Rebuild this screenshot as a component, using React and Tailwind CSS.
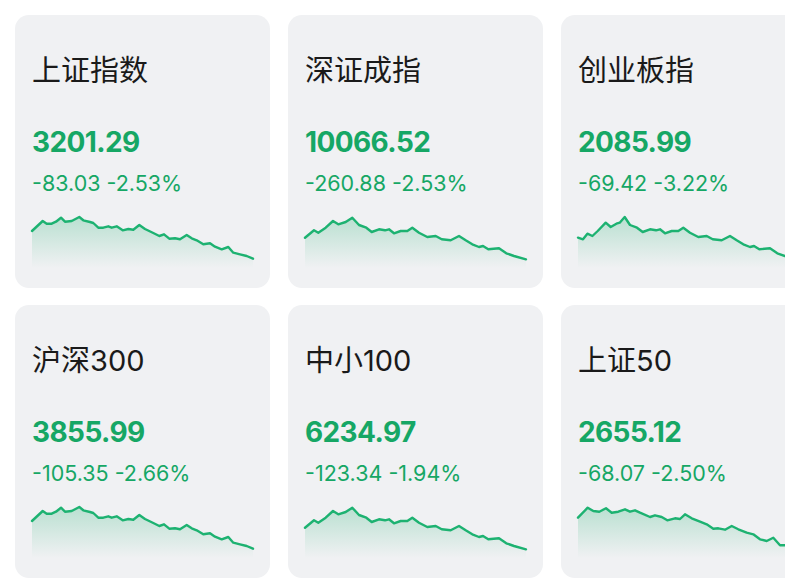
import React from "react";

const shA = [
  [0, 19], [10.7, 9], [14.7, 11.7], [19.7, 11.7], [24, 9.7], [29, 5.7], [33, 9.7], [39.7, 9],
  [47.3, 5], [51.3, 8.3], [58, 10], [61.3, 11], [66.3, 15.7], [71.3, 15.7], [76.3, 14.3],
  [79.7, 15.7], [84.7, 14.3], [90.7, 18.3], [96.3, 17], [101.3, 17.7], [107.3, 13], [113, 17],
  [121.3, 21], [127.3, 24], [132, 22.3], [137.3, 26.7], [143, 26.3], [148, 27.3], [154.7, 23],
  [159.7, 26.3], [164.7, 28.3], [171.3, 32.3], [178, 31.3], [183, 34.7], [189.7, 37.3],
  [196.3, 35], [201.3, 40.7], [208, 42.3], [214.7, 44], [221, 46.7],
];

const szB = [
  [0, 25.7], [9, 18.3], [13.3, 20.7], [20.7, 15.7], [28, 9], [33.3, 12.3], [40.7, 10], [47.3, 5.7],
  [54, 13], [61.3, 15.7], [66.7, 20], [74, 17.3], [80, 18.3], [84, 17.3], [89, 21.3], [95.7, 19],
  [102.3, 19], [107.3, 15.7], [114, 20.7], [122.3, 25], [130.7, 24], [136.7, 27.3], [145.7, 28.3],
  [154, 24], [160.7, 28.3], [167.3, 32.3], [174, 35], [178, 34], [183.3, 37.3], [194, 36.3],
  [201.3, 41.3], [209, 44], [221, 47.3],
];

const cyC = [
  [0, 25.7], [5, 27.3], [9.4, 21.7], [14.4, 24], [19.7, 19], [27.7, 10.7], [32.7, 15], [38.4, 11.7],
  [41.7, 10.7], [46.7, 5], [52, 13], [59, 15.7], [64.7, 20], [72, 17.3], [78, 18.3], [82, 17.3],
  [87, 21.3], [93.7, 19], [100.3, 19], [105.3, 15.7], [112, 20.7], [120.3, 25], [128.7, 24],
  [134.7, 27.3], [143.7, 28.3], [152, 24], [158.7, 28.3], [165.3, 32.3], [172, 35], [176, 34],
  [181.3, 37.3], [192, 36.3], [199.3, 41.3], [207, 44], [221, 47.3],
];

const sz50 = [
  [0, 15.7], [9.7, 5.7], [15.3, 9], [21.3, 9.7], [28, 6.3], [33.7, 10.7], [40.3, 9.7], [47, 7.3],
  [52, 9.7], [57, 8.3], [62, 10.7], [72, 15], [77, 13.3], [83.7, 15], [89.3, 18.3], [97, 16.3],
  [102, 17], [107, 12.3], [113.7, 16.3], [122, 19.7], [128.7, 22.3], [135.3, 26.7], [140.3, 26.3],
  [147, 27.7], [153.7, 24], [160.3, 27.3], [168.7, 30.7], [175.3, 32.3], [182, 37.3], [188.7, 39],
  [195.3, 35.7], [202, 43.3], [207, 43.3], [214, 45], [221, 46.5],
];

const indexes = [
  { name: "上证指数", price: "3201.29", change: "-83.03 -2.53%", points: shA },
  { name: "深证成指", price: "10066.52", change: "-260.88 -2.53%", points: szB },
  { name: "创业板指", price: "2085.99", change: "-69.42 -3.22%", points: cyC },
  { name: "沪深300", price: "3855.99", change: "-105.35 -2.66%", points: shA },
  { name: "中小100", price: "6234.97", change: "-123.34 -1.94%", points: szB },
  { name: "上证50", price: "2655.12", change: "-68.07 -2.50%", points: sz50 },
];

function Spark({ points, id }) {
  const line = points.map(([x, y], i) => `${i ? "L" : "M"}${x},${y}`).join(" ");
  const area = `${line} L221,56 L0,56 Z`;
  return (
    <svg width="221" height="56" viewBox="0 0 221 56" className="block overflow-visible">
      <defs>
        <linearGradient id={id} x1="0" y1="0" x2="0" y2="1">
          <stop offset="0%" stopColor="#1fb070" stopOpacity="0.26" />
          <stop offset="100%" stopColor="#1fb070" stopOpacity="0" />
        </linearGradient>
      </defs>
      <path d={area} fill={`url(#${id})`} />
      <path d={line} fill="none" stroke="#1db271" strokeWidth="2.4" strokeLinejoin="round" strokeLinecap="round" />
    </svg>
  );
}

function IndexCard({ item, index }) {
  return (
    <div className="flex h-[273px] w-[255px] shrink-0 flex-col rounded-[14px] bg-[#f0f1f3] px-[17px] pt-[41px]">
      <div className="text-[29px] leading-none text-[#1a1a1a]">{item.name}</div>
      <div className="mt-[43px] text-[28px] font-bold leading-none tracking-[-0.6px] text-[#16a765]">
        {item.price}
      </div>
      <div className="mt-[17px] text-[21.5px] leading-none text-[#16a765]">{item.change}</div>
      <div className="mt-[17px]">
        <Spark points={item.points} id={`spark${index}`} />
      </div>
    </div>
  );
}

export default function App() {
  return (
    <div className="h-[588px] w-[785px] overflow-hidden bg-white font-['Inter','Noto_Sans_CJK_SC',sans-serif]">
      <div className="grid w-max grid-cols-[255px_255px_255px] gap-x-[18px] gap-y-[17px] p-[15px]">
        {indexes.map((item, i) => (
          <IndexCard key={item.name} item={item} index={i} />
        ))}
      </div>
    </div>
  );
}
